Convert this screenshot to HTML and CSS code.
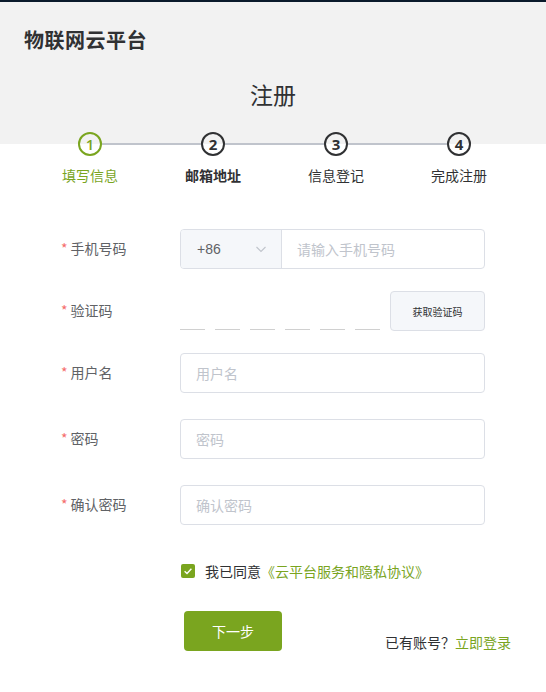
FILE: index.html
```html
<!DOCTYPE html>
<html lang="zh-CN">
<head>
<meta charset="utf-8">
<title>注册 - 物联网云平台</title>
<link rel="stylesheet" href="styles.css">
</head>
<body>
<div class="page">
  <header class="header">
    <div class="brand">物联网云平台</div>
    <h1 class="heading">注册</h1>
  </header>

  <section class="steps">
    <div class="step-track">
      <span class="dot active">1</span>
      <span class="bar"></span>
      <span class="dot">2</span>
      <span class="bar"></span>
      <span class="dot">3</span>
      <span class="bar"></span>
      <span class="dot">4</span>
    </div>
    <div class="step-labels">
      <span class="step-label active">填写信息</span>
      <span class="step-label bold">邮箱地址</span>
      <span class="step-label">信息登记</span>
      <span class="step-label">完成注册</span>
    </div>
  </section>

  <form class="form">
    <div class="row r1">
      <label class="label"><span class="req">*</span>手机号码</label>
      <div class="control phone">
        <div class="prefix">
          <span>+86</span>
          <svg class="chev" width="12" height="12" viewBox="0 0 12 12"><path d="M1.5 4 L6 8.5 L10.5 4" fill="none" stroke="#c0c4cc" stroke-width="1.1"/></svg>
        </div>
        <span class="ph">请输入手机号码</span>
      </div>
    </div>

    <div class="row r2">
      <label class="label"><span class="req">*</span>验证码</label>
      <div class="control code">
        <div class="cells">
          <span class="cell"></span><span class="cell"></span><span class="cell"></span>
          <span class="cell"></span><span class="cell"></span><span class="cell"></span>
        </div>
        <button type="button" class="getcode">获取验证码</button>
      </div>
    </div>

    <div class="row r3">
      <label class="label"><span class="req">*</span>用户名</label>
      <div class="control input"><span class="ph">用户名</span></div>
    </div>

    <div class="row r4">
      <label class="label"><span class="req">*</span>密码</label>
      <div class="control input"><span class="ph">密码</span></div>
    </div>

    <div class="row r5">
      <label class="label"><span class="req">*</span>确认密码</label>
      <div class="control input"><span class="ph">确认密码</span></div>
    </div>

    <div class="agree">
      <span class="checkbox">
        <svg width="14" height="14" viewBox="0 0 14 14"><path d="M3.6 7.2 L6 9.4 L10.4 4.8" fill="none" stroke="#fff" stroke-width="1.4"/></svg>
      </span>
      <span class="agree-text">我已同意<a class="link">《云平台服务和隐私协议》</a></span>
    </div>

    <div class="actions">
      <button type="button" class="next">下一步</button>
      <span class="login">已有账号？<a class="link">立即登录</a></span>
    </div>
  </form>
</div>
</body>
</html>
```

FILE: styles.css
```css
* { box-sizing: border-box; }
html, body { margin: 0; padding: 0; background: #fff; }
body {
  font-family: "Noto Sans CJK SC", "Noto Sans", sans-serif;
  color: #333;
  font-size: 14px;
}
.page { width: 546px; }

.header {
  background: #f2f2f2;
  border-top: 2px solid #0a1a2b;
  padding: 23px 0 33px 24px;
}
.brand {
  font-size: 20px;
  font-weight: 700;
  line-height: 30px;
  color: #303133;
  letter-spacing: 0.5px;
}
.heading {
  margin: 24px 0 0 -24px;
  text-align: center;
  font-size: 23px;
  font-weight: 400;
  line-height: 30px;
  padding-bottom: 2px;
  color: #303133;
}

.steps { margin-top: -12px; }
.step-track {
  display: flex;
  align-items: center;
  padding-left: 78px;
  height: 24px;
}
.dot {
  width: 24px;
  height: 24px;
  border: 2px solid #303133;
  border-radius: 50%;
  display: flex;
  align-items: center;
  justify-content: center;
  font-family: "Open Sans", "Noto Sans", sans-serif;
  font-weight: 700;
  font-size: 15px;
  line-height: 1;
  color: #303133;
  flex: none;
}
.dot.active { border-color: #7aa51f; color: #7aa51f; font-weight: 600; }
.bar {
  width: 99px;
  height: 2px;
  background: #c0c4cc;
  flex: none;
}
.step-labels {
  display: grid;
  grid-template-columns: repeat(4, 123px);
  padding-left: 28.5px;
  margin-top: 9px;
}
.step-label {
  text-align: center;
  line-height: 20px;
  color: #303133;
}
.step-label.active { color: #7aa51f; }
.step-label.bold { font-weight: 700; }

.form { padding-left: 61px; margin-top: 44px; }
.row {
  display: flex;
  align-items: center;
  height: 40px;
}
.r2 { margin-top: 22px; }
.r3 { margin-top: 22px; }
.r4 { margin-top: 26px; }
.r5 { margin-top: 26px; }
.label {
  width: 119px;
  color: #606266;
  line-height: 20px;
  margin-top: -2px;
}
.req { color: #f56c6c; margin-right: 3px; }

.control { width: 305px; height: 40px; }
.input, .phone {
  border: 1px solid #dcdfe6;
  border-radius: 4px;
  display: flex;
  align-items: center;
}
.input { padding-left: 15px; }
.ph { color: #c0c4cc; }
.phone { overflow: hidden; }
.prefix {
  width: 101px;
  height: 100%;
  background: #f5f7fa;
  border-right: 1px solid #dcdfe6;
  display: flex;
  align-items: center;
  justify-content: space-between;
  padding: 0 14px 0 16px;
  color: #606266;
  font-family: "Liberation Sans", "Noto Sans", sans-serif;
}
.phone .ph { padding-left: 15px; }

.code { display: flex; align-items: flex-end; justify-content: space-between; }
.cells { display: flex; gap: 10px; padding-bottom: 1px; }
.cell { width: 25px; height: 1px; background: #d0d0d0; }
.getcode {
  width: 95px;
  height: 40px;
  background: #f5f7fa;
  border: 1px solid #dcdfe6;
  border-radius: 4px;
  font-family: inherit;
  font-size: 10px;
  color: #303133;
  padding: 0;
}

.agree {
  margin: 36px 0 0 119px;
  display: flex;
  align-items: center;
  height: 20px;
}
.checkbox {
  width: 14px;
  height: 14px;
  background: #7aa51f;
  border-radius: 2px;
  display: flex;
  margin-left: 1px;
}
.agree-text { margin-left: 10px; color: #303133; }
.link { color: #7aa51f; text-decoration: none; }

.actions {
  margin: 30px 0 0 123px;
  display: flex;
  align-items: flex-end;
}
.next {
  width: 98px;
  height: 40px;
  background: #7aa51f;
  border: none;
  border-radius: 4px;
  color: #fff;
  font-family: inherit;
  font-size: 14px;
  padding: 0;
}
.login {
  margin-left: 103px;
  line-height: 20px;
  color: #303133;
  margin-bottom: -1px;
}
```
